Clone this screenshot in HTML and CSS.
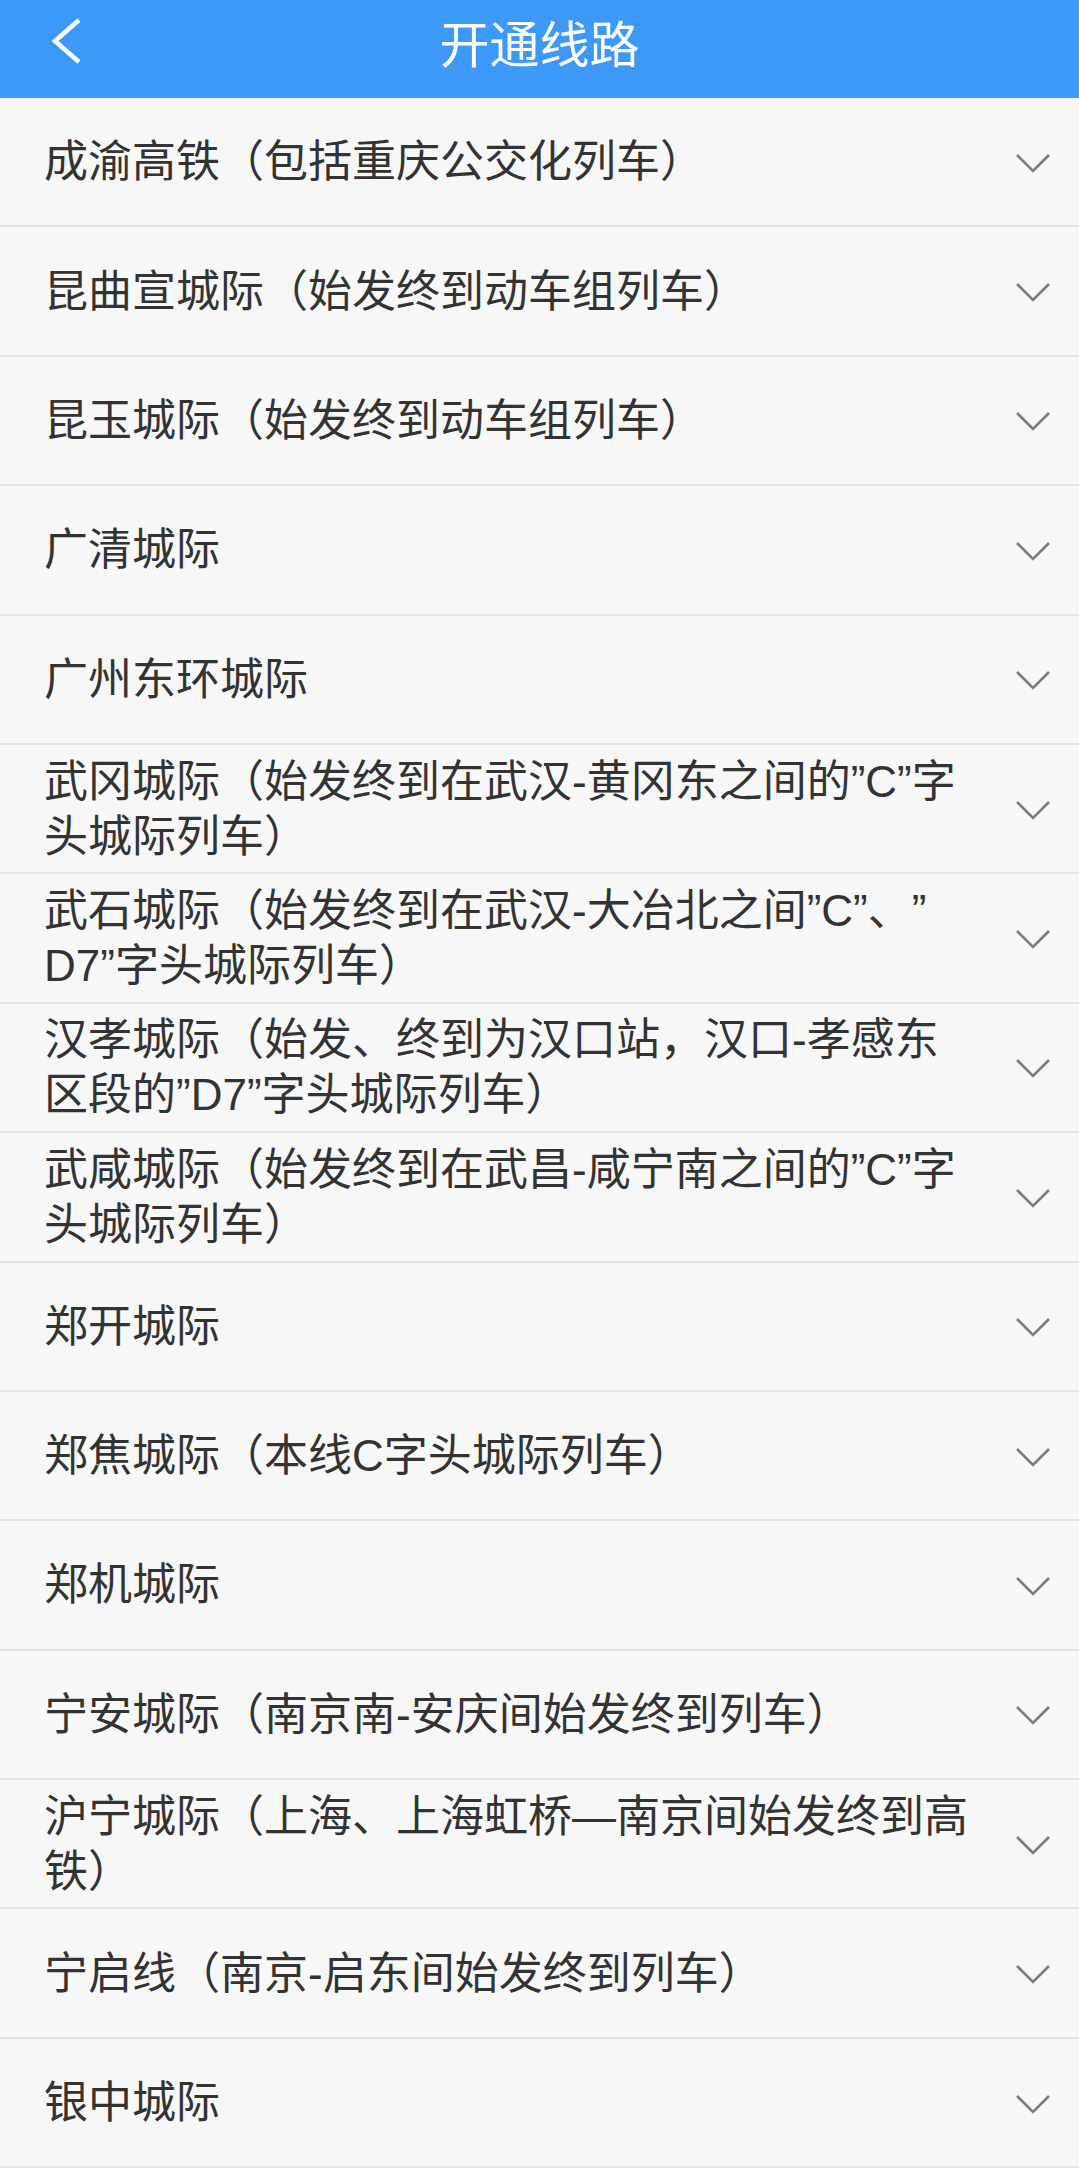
FILE: index.html
```html
<!DOCTYPE html>
<html lang="zh-CN">
<head>
    <meta charset="UTF-8">
    <meta name="viewport" content="width=device-width, initial-scale=1.0">
    <title>开通线路</title>
    <link rel="stylesheet" href="styles.css">
</head>
<body>
    <div class="top-bar">
        <a class="back-button" href="#">
            <svg width="34" height="48" viewBox="0 0 34 48">
                <polyline points="29,3 5,24 29,45" fill="none" stroke="#fff" stroke-width="4.5" />
            </svg>
        </a>
        <h1>开通线路</h1>
    </div>

    <ul class="line-list">
        <li class="line-item">
            <span class="line-name">成渝高铁（包括重庆公交化列车）</span>
            <svg class="arrow" width="34" height="20" viewBox="0 0 34 20"><polyline points="1,2 17,18 33,2" /></svg>
        </li>
        <li class="line-item">
            <span class="line-name">昆曲宣城际（始发终到动车组列车）</span>
            <svg class="arrow" width="34" height="20" viewBox="0 0 34 20"><polyline points="1,2 17,18 33,2" /></svg>
        </li>
        <li class="line-item">
            <span class="line-name">昆玉城际（始发终到动车组列车）</span>
            <svg class="arrow" width="34" height="20" viewBox="0 0 34 20"><polyline points="1,2 17,18 33,2" /></svg>
        </li>
        <li class="line-item">
            <span class="line-name">广清城际</span>
            <svg class="arrow" width="34" height="20" viewBox="0 0 34 20"><polyline points="1,2 17,18 33,2" /></svg>
        </li>
        <li class="line-item">
            <span class="line-name">广州东环城际</span>
            <svg class="arrow" width="34" height="20" viewBox="0 0 34 20"><polyline points="1,2 17,18 33,2" /></svg>
        </li>
        <li class="line-item">
            <span class="line-name">武冈城际（始发终到在武汉-黄冈东之间的”C”字头城际列车）</span>
            <svg class="arrow" width="34" height="20" viewBox="0 0 34 20"><polyline points="1,2 17,18 33,2" /></svg>
        </li>
        <li class="line-item">
            <span class="line-name">武石城际（始发终到在武汉-大冶北之间”C”、”<br>D7”字头城际列车）</span>
            <svg class="arrow" width="34" height="20" viewBox="0 0 34 20"><polyline points="1,2 17,18 33,2" /></svg>
        </li>
        <li class="line-item">
            <span class="line-name">汉孝城际（始发、终到为汉口站，汉口-孝感东区段的”D7”字头城际列车）</span>
            <svg class="arrow" width="34" height="20" viewBox="0 0 34 20"><polyline points="1,2 17,18 33,2" /></svg>
        </li>
        <li class="line-item">
            <span class="line-name">武咸城际（始发终到在武昌-咸宁南之间的”C”字头城际列车）</span>
            <svg class="arrow" width="34" height="20" viewBox="0 0 34 20"><polyline points="1,2 17,18 33,2" /></svg>
        </li>
        <li class="line-item">
            <span class="line-name">郑开城际</span>
            <svg class="arrow" width="34" height="20" viewBox="0 0 34 20"><polyline points="1,2 17,18 33,2" /></svg>
        </li>
        <li class="line-item">
            <span class="line-name">郑焦城际（本线C字头城际列车）</span>
            <svg class="arrow" width="34" height="20" viewBox="0 0 34 20"><polyline points="1,2 17,18 33,2" /></svg>
        </li>
        <li class="line-item">
            <span class="line-name">郑机城际</span>
            <svg class="arrow" width="34" height="20" viewBox="0 0 34 20"><polyline points="1,2 17,18 33,2" /></svg>
        </li>
        <li class="line-item">
            <span class="line-name">宁安城际（南京南-安庆间始发终到列车）</span>
            <svg class="arrow" width="34" height="20" viewBox="0 0 34 20"><polyline points="1,2 17,18 33,2" /></svg>
        </li>
        <li class="line-item">
            <span class="line-name">沪宁城际（上海、上海虹桥—南京间始发终到高铁）</span>
            <svg class="arrow" width="34" height="20" viewBox="0 0 34 20"><polyline points="1,2 17,18 33,2" /></svg>
        </li>
        <li class="line-item">
            <span class="line-name">宁启线（南京-启东间始发终到列车）</span>
            <svg class="arrow" width="34" height="20" viewBox="0 0 34 20"><polyline points="1,2 17,18 33,2" /></svg>
        </li>
        <li class="line-item">
            <span class="line-name">银中城际</span>
            <svg class="arrow" width="34" height="20" viewBox="0 0 34 20"><polyline points="1,2 17,18 33,2" /></svg>
        </li>
    </ul>
</body>
</html>
```

FILE: styles.css
```css
body {
    font-family: "Liberation Sans", "Noto Sans CJK SC", sans-serif;
    background-color: #f7f7f7;
    margin: 0;
    padding: 0;
}

.top-bar {
    position: relative;
    height: 98px;
    box-sizing: border-box;
    padding-bottom: 16px;
    background-color: #3c99f8;
    display: flex;
    align-items: center;
    justify-content: center;
}

.top-bar h1 {
    margin: 0;
    font-family: "Noto Sans CJK SC", sans-serif;
    font-size: 50px;
    font-weight: normal;
    color: #fff;
    line-height: 60px;
}

/* back arrow sits over the bar, left side */
.back-button {
    position: absolute;
    left: 50px;
    top: 17px;
    display: block;
    width: 34px;
    height: 48px;
}

.line-list {
    list-style: none;
    margin: 0;
    padding: 0;
}

.line-item {
    height: 129.4px;
    box-sizing: border-box;
    border-bottom: 2px solid #e4e4e4;
    display: flex;
    align-items: center;
    padding: 0 29px 0 44px;
}

.line-name {
    flex: 1;
    max-width: 936px;
    margin-right: auto;
    font-size: 44px;
    line-height: 55px;
    color: #333;
    text-spacing-trim: space-all;
}

.arrow {
    flex-shrink: 0;
    margin-top: 2px;
}

.arrow polyline {
    fill: none;
    stroke: #7c7c7c;
    stroke-width: 2.6;
}
```
